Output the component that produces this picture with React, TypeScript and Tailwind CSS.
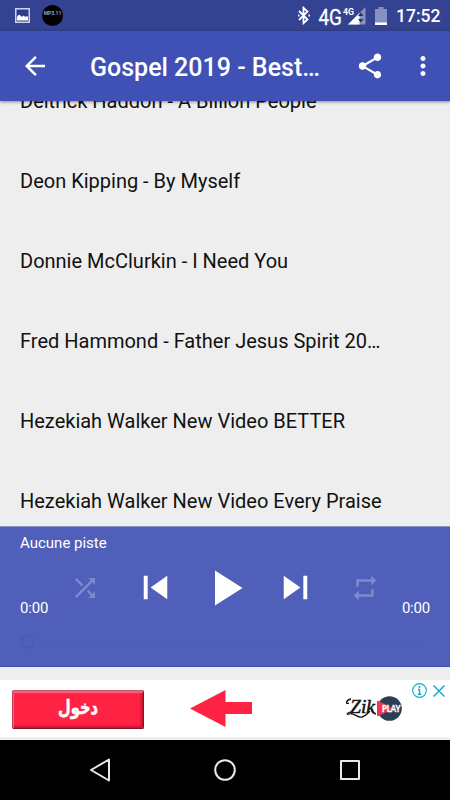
const tracks = [
  "Deitrick Haddon - A Billion People",
  "Deon Kipping - By Myself",
  "Donnie McClurkin - I Need You",
  "Fred Hammond - Father Jesus Spirit 2016",
  "Hezekiah Walker New Video BETTER",
  "Hezekiah Walker New Video Every Praise",
];

function Icon({ d, className }: { d: string; className: string }) {
  return (
    <svg viewBox="0 0 24 24" fill="currentColor" className={`shrink-0 ${className}`}>
      <path d={d} />
    </svg>
  );
}

function StatusBar() {
  return (
    <div className="h-[31px] shrink-0 bg-[#334291] flex items-center pl-[15px] pr-[10px] text-white">
      <svg width="15" height="15" viewBox="0 0 15 15" className="shrink-0">
        <rect x="0.75" y="0.75" width="13.5" height="13.5" fill="#2c3d8c" stroke="#cdd3ee" strokeWidth="1.5" />
        <path d="M2 12.500V9l1.500-2H5l1 1.500h1.500l1-1 1 1H13v4z" fill="#fff" />
      </svg>
      <div className="ml-3 size-[21px] rounded-full bg-black flex justify-center pt-[5px]">
        <span className="text-[5px] leading-[7px] font-bold text-gray-400">MP3.11</span>
      </div>
      <svg width="12" height="19" viewBox="0 0 12 19" className="ml-auto shrink-0" fill="none" stroke="#fff" strokeWidth="1.800">
        <path d="M1 5l8.500 8.500L5.500 17.200V1.800l4 3.700L1 14" />
        <path d="M0 9.500h1.500M10.500 9.500h1.500" strokeWidth="1.800" />
      </svg>
      <svg width="49" height="24" viewBox="0 0 49 24" className="ml-[8px] shrink-0" fill="#fff">
        <text x="0.500" y="20.500" fontSize="22.500" textLength="23.500" lengthAdjust="spacingAndGlyphs" stroke="#fff" strokeWidth="0.3">4G</text>
        <path d="M47.500 3v17.500H30z" fill="#8790c2" />
        <path d="M41.500 9v11.500H30z" />
        <path d="M40 12l2.800-3.500 2.800 3.500zM40 15h5.600l-2.800 3.500z" fill="#273259" />
        <text x="25" y="10.500" fontSize="9.500" fontWeight="700" textLength="11" lengthAdjust="spacingAndGlyphs">4G</text>
      </svg>
      <svg width="12" height="18" viewBox="0 0 12 18" className="ml-[8px] mt-px shrink-0">
        <path d="M3.500 0h5v2H12v16H0V2h3.500z" fill="#8790c2" />
        <path d="M0 15.500h12V18H0z" fill="#fff" />
      </svg>
      <span className="ml-[9px] mt-px w-[44px] text-[17.5px] leading-[20px] font-medium whitespace-nowrap">17:52</span>
    </div>
  );
}

function AppBar() {
  return (
    <header className="relative z-10 h-[70px] shrink-0 bg-[#3f51b5] flex items-center pl-5 text-white shadow-[0_1px_3px_rgba(0,0,0,0.45)]">
      <Icon className="size-[30px]" d="M20 11H7.830l5.590-5.590L12 4l-8 8 8 8 1.410-1.410L7.830 13H20v-2z" />
      <h1 className="ml-10 w-[236px] truncate text-[25px] font-medium pt-1">Gospel 2019 - Best Songs</h1>
      <Icon
        className="ml-[29px] size-[30px]"
        d="M18 16.080c-.76 0-1.440.3-1.960.77L8.910 12.700c.05-.23.09-.46.09-.7s-.04-.47-.09-.7l7.050-4.110c.54.5 1.250.81 2.040.81 1.660 0 3-1.340 3-3s-1.340-3-3-3-3 1.340-3 3c0 .24.04.47.09.7L8.040 9.810C7.500 9.310 6.790 9 6 9c-1.660 0-3 1.340-3 3s1.340 3 3 3c.79 0 1.500-.31 2.040-.81l7.120 4.160c-.05.21-.08.43-.08.65 0 1.610 1.310 2.920 2.920 2.920s2.920-1.310 2.920-2.920-1.310-2.920-2.920-2.920z"
      />
      <Icon
        className="ml-[22.5px] size-[30px]"
        d="M12 8c1.100 0 2-.9 2-2s-.9-2-2-2-2 .9-2 2 .9 2 2 2zm0 2c-1.100 0-2 .9-2 2s.9 2 2 2 2-.9 2-2-.9-2-2-2zm0 6c-1.100 0-2 .9-2 2s.9 2 2 2 2-.9 2-2-.9-2-2-2z"
      />
    </header>
  );
}

function Player() {
  return (
    <section className="h-[141px] shrink-0 bg-[#5060ba] border-t border-t-[#8b93c3] border-b border-b-[#3f51b5] px-5 text-white">
      <p className="h-[30px] pt-[6px] text-[15px] leading-[20px]">Aucune piste</p>
      <div className="grid grid-cols-[30px_repeat(5,1fr)_30px] h-[60px] items-center justify-items-center">
        <span className="justify-self-start pt-[41px] text-[15px] leading-[20px] tracking-[-0.2px]">0:00</span>
        <Icon
          className="size-[30px] text-[#8089cc]"
          d="M10.590 9.170L5.410 4 4 5.410l5.170 5.170 1.420-1.410zM14.500 4l2.040 2.040L4 18.590 5.410 20 17.960 7.460 20 9.500V4h-5.500zm.33 9.410l-1.410 1.410 3.130 3.130L14.500 20H20v-5.500l-2.040 2.040-3.130-3.130z"
        />
        <Icon className="size-[47px]" d="M6 6h2v12H6zm3.500 6l8.500 6V6z" />
        <Icon className="size-[60px]" d="M8 5v14l11-7z" />
        <Icon className="size-[47px]" d="M6 18l8.500-6L6 6v12zM16 6v12h2V6h-2z" />
        <Icon
          className="size-[30px] text-[#8089cc]"
          d="M7 7h10v3l4-4-4-4v3H5v6h2V7zm10 10H7v-3l-4 4 4 4v-3h12v-6h-2v4z"
        />
        <span className="justify-self-end pt-[41px] text-[15px] leading-[20px] tracking-[-0.2px]">0:00</span>
      </div>
      {/* Seek bar */}
      <div className="flex items-center pt-[18px] pr-[6px]">
        <div className="size-[14px] rounded-full border-2 border-[#4b5bb4]" />
        <div className="h-px flex-1 bg-[#4d5db6]" />
      </div>
    </section>
  );
}

function AdBanner() {
  return (
    <div className="relative h-[60px] shrink-0 bg-white border-b-[3px] border-[#eeeeee] flex items-start">
      <div className="ml-3 mt-[10px] w-[132px] h-[39px] rounded-[2px] bg-[#ff2243] border border-t-[#c8566c] border-l-[#c93c55] border-r-[#8d1029] border-b-[#8d1029] shadow-[inset_1px_2px_1px_#f0687e,inset_-2px_-2px_2px_#c11735] flex items-center justify-center">
        <svg width="42" height="28" viewBox="0 0 42 28" className="shrink-0">
          <text x="21" y="18" fontSize="20" fontWeight="700" fontFamily="DejaVu Sans, sans-serif" textAnchor="middle" fill="#fff" stroke="#fff" strokeWidth="0.5" textLength="40" lengthAdjust="spacingAndGlyphs">
            دخول
          </text>
        </svg>
      </div>
      <svg width="62" height="38" viewBox="0 0 62 38" className="ml-[46px] mt-[9px] shrink-0">
        <path d="M0 19.500L35.500 1v12H62v12H35.500v13z" fill="#ff2243" />
      </svg>
      <svg width="60" height="34" viewBox="0 0 60 34" className="ml-[92px] mt-[13px] shrink-0">
        <circle cx="45.500" cy="15.500" r="12.300" fill="#2c3e55" />
        <path d="M33 8.500q0-1 1.500-.5l15 7.500-15 7.500q-1.500.5-1.500-.5z" fill="#f5324f" />
        <text x="38" y="19" fontSize="9.500" fontWeight="900" fontFamily="Lato, sans-serif" fill="#fff" stroke="#fff" strokeWidth="0.3" textLength="18.500" lengthAdjust="spacingAndGlyphs">PLAY</text>
        <text x="18.500" y="19.500" fontSize="19" fontStyle="italic" fontFamily="Liberation Serif, serif" fill="#111" textAnchor="middle" stroke="#111" strokeWidth="0.5" textLength="25" lengthAdjust="spacingAndGlyphs">Zik</text>
        <path d="M7 6C2 7 1 12 5 10M6 19c-3 1-4 3-1 2 5-2 8 4 13 3 4-1 6-4 8-6M27 15c1 3 2 6 5 6" fill="none" stroke="#111" strokeWidth="1.300" />
      </svg>
      <div className="absolute right-[5px] top-[3px] flex items-center gap-[6px]">
        <svg width="15" height="15" viewBox="0 0 15 15" fill="none" stroke="#18acd2">
          <circle cx="7.500" cy="7.500" r="6.800" strokeWidth="1.200" />
          <path d="M7.500 3v2M6 6.500h1.500V11M5.800 11.300h3.600" strokeWidth="1.500" />
        </svg>
        <svg width="12" height="12" viewBox="0 0 12 12" stroke="#18acd2" strokeWidth="1.500">
          <path d="M0.500 0.500l11 11M11.500 0.500l-11 11" />
        </svg>
      </div>
    </div>
  );
}

function NavBar() {
  return (
    <nav className="h-[60px] shrink-0 bg-black grid grid-cols-[125px_125px_125px] justify-center justify-items-center items-center">
      <svg width="22" height="24" viewBox="0 0 22 24" fill="none" stroke="#e8e8e8" strokeWidth="2" strokeLinejoin="round">
        <path d="M20 1.500v21L2 12z" />
      </svg>
      <svg width="22" height="22" viewBox="0 0 22 22" fill="none" stroke="#e8e8e8" strokeWidth="2">
        <circle cx="11" cy="11" r="9.800" />
      </svg>
      <div className="size-5 rounded-[1px] border-2 border-[#e8e8e8]" />
    </nav>
  );
}

export default function App() {
  return (
    <div className="w-[450px] h-[800px] overflow-hidden flex flex-col bg-[#eeeeee] font-[Roboto,sans-serif]">
      <StatusBar />
      <AppBar />
      <main className="h-[425px] shrink-0 overflow-hidden">
        <ul className="-mt-10">
          {tracks.map((track) => (
            <li key={track} className="h-20 flex items-center pl-5 text-[20px] text-[#111111]">
              <span className="w-[365px] truncate">{track}</span>
            </li>
          ))}
        </ul>
      </main>
      <Player />
      <div className="h-[13px] shrink-0" />
      <AdBanner />
      <NavBar />
    </div>
  );
}
